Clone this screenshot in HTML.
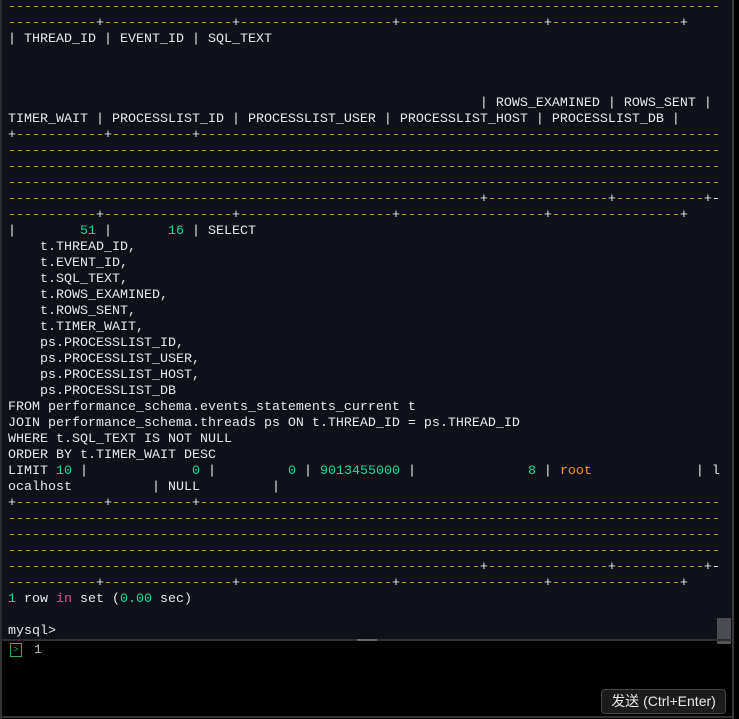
<!DOCTYPE html>
<html><head><meta charset="utf-8"><style>
html,body{margin:0;padding:0;background:#000;}
body{width:739px;height:719px;position:relative;overflow:hidden;}
#term{position:absolute;left:0;top:0;width:733px;height:639px;background:#0e111a;border-left:2px solid #2a2d34;box-sizing:border-box;}
pre{position:absolute;left:8px;top:0px;margin:0;font-family:"Liberation Mono","DejaVu Sans Mono",monospace;font-size:13.33px;line-height:16px;color:#e8e8e8;white-space:pre;}
.o{color:#d99a22}.g{color:#19d9a0}.p{color:#e04f8a}.r{color:#f29a1a}
#sb{position:absolute;left:717px;top:618px;width:14px;height:21px;background:#4a4c52;}
#div{position:absolute;left:0;top:639px;width:733px;height:2px;background:#2c2e33;}
#grip{position:absolute;left:357px;top:639px;width:20px;height:2px;background:#666;}
#rb{position:absolute;left:732px;top:0;width:2px;height:719px;background:#3a3a3a;}
#bb{position:absolute;left:0;top:716px;width:734px;height:2px;background:#333;}
#lb{position:absolute;left:0;top:639px;width:2px;height:80px;background:#333;}
#icon{position:absolute;left:10px;top:643px;width:10px;height:12px;border:1px solid #2fae5a;color:#2fae5a;font:9px/12px "Liberation Mono",monospace;text-align:center;}
#in{position:absolute;left:34px;top:642px;color:#bbb;font:13px/16px "Liberation Mono",monospace;}
#btn{position:absolute;left:601px;top:689px;width:125px;height:25px;background:#1c1c1c;border:1px solid #444;border-radius:4px;box-sizing:border-box;color:#e8e8e8;font:14px/23px "Liberation Sans","Noto Sans CJK SC",sans-serif;text-align:center;}
#sb2{position:absolute;left:717px;top:641px;width:14px;height:3px;background:#555;}
</style></head><body>
<div id="term"></div>
<pre><span class="o">-----------------------------------------------------------------------------------------</span>
<span class="o">-----------</span>+<span class="o">----------------</span>+<span class="o">-------------------</span>+<span class="o">------------------</span>+<span class="o">----------------</span>+
| THREAD_ID | EVENT_ID | SQL_TEXT



                                                           | ROWS_EXAMINED | ROWS_SENT |
TIMER_WAIT | PROCESSLIST_ID | PROCESSLIST_USER | PROCESSLIST_HOST | PROCESSLIST_DB |
+<span class="o">-----------</span>+<span class="o">----------</span>+<span class="o">-----------------------------------------------------------------</span>
<span class="o">-----------------------------------------------------------------------------------------</span>
<span class="o">-----------------------------------------------------------------------------------------</span>
<span class="o">-----------------------------------------------------------------------------------------</span>
<span class="o">-----------------------------------------------------------</span>+<span class="o">---------------</span>+<span class="o">-----------</span>+-
<span class="o">-----------</span>+<span class="o">----------------</span>+<span class="o">-------------------</span>+<span class="o">------------------</span>+<span class="o">----------------</span>+
|        <span class="g">51</span> |       <span class="g">16</span> | SELECT
    t.THREAD_ID,
    t.EVENT_ID,
    t.SQL_TEXT,
    t.ROWS_EXAMINED,
    t.ROWS_SENT,
    t.TIMER_WAIT,
    ps.PROCESSLIST_ID,
    ps.PROCESSLIST_USER,
    ps.PROCESSLIST_HOST,
    ps.PROCESSLIST_DB
FROM performance_schema.events_statements_current t
JOIN performance_schema.threads ps ON t.THREAD_ID = ps.THREAD_ID
WHERE t.SQL_TEXT IS NOT NULL
ORDER BY t.TIMER_WAIT DESC
LIMIT <span class="g">10</span> |             <span class="g">0</span> |         <span class="g">0</span> | <span class="g">9013455000</span> |              <span class="g">8</span> | <span class="r">root</span>             | l
ocalhost          | NULL         |
+<span class="o">-----------</span>+<span class="o">----------</span>+<span class="o">-----------------------------------------------------------------</span>
<span class="o">-----------------------------------------------------------------------------------------</span>
<span class="o">-----------------------------------------------------------------------------------------</span>
<span class="o">-----------------------------------------------------------------------------------------</span>
<span class="o">-----------------------------------------------------------</span>+<span class="o">---------------</span>+<span class="o">-----------</span>+-
<span class="o">-----------</span>+<span class="o">----------------</span>+<span class="o">-------------------</span>+<span class="o">------------------</span>+<span class="o">----------------</span>+
<span class="g">1</span> row <span class="p">in</span> set (<span class="g">0.00</span> sec)

mysql&gt;</pre>
<div id="sb"></div>
<div id="div"></div>
<div id="grip"></div>
<div id="sb2"></div>
<div id="rb"></div>
<div id="bb"></div>
<div id="lb"></div>
<div id="icon">&gt;</div>
<div id="in">1</div>
<div id="btn">发送 (Ctrl+Enter)</div>
</body></html>
